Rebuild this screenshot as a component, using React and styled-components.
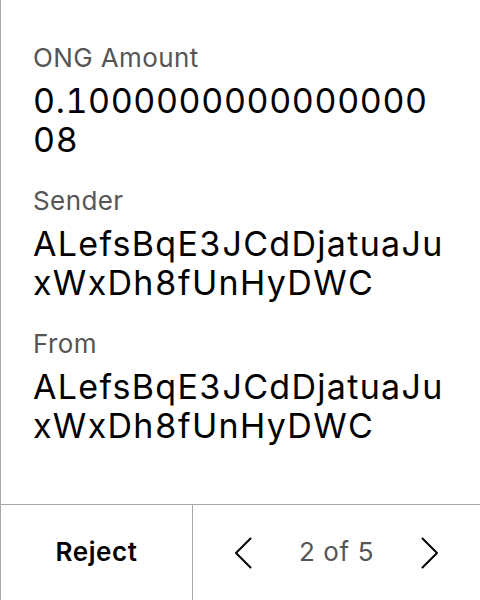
import React from 'react';
import styled, { createGlobalStyle } from 'styled-components';

const GlobalStyle = createGlobalStyle`
  html, body {
    margin: 0;
    padding: 0;
    background: #ffffff;
  }
  body {
    font-family: Inter, "Noto Sans", sans-serif;
  }
`;

const Screen = styled.div`
  width: 480px;
  height: 600px;
  box-sizing: border-box;
  border-left: 1px solid #a8a8a8;
  display: flex;
  flex-direction: column;
  background: #fff;
`;

const Content = styled.div`
  flex: 1;
  padding: 42px 36px 0 32px;
  display: flex;
  flex-direction: column;
  gap: 26px;
`;

const Field = styled.div`
  display: flex;
  flex-direction: column;
  gap: 7px;
`;

const Label = styled.div`
  font-size: 26px;
  line-height: 32px;
  letter-spacing: 0.4px;
  color: #555555;
`;

const Value = styled.div`
  font-size: 34px;
  line-height: 39px;
  letter-spacing: ${props => (props.$numeric ? '0.6px' : '1.3px')};
  font-variant-numeric: tabular-nums;
  color: #000;
  word-break: break-all;
`;

const Footer = styled.div`
  height: 95px;
  border-top: 1px solid #a8a8a8;
  display: grid;
  grid-template-columns: 192px 1fr;
`;

const RejectButton = styled.button`
  border: none;
  border-right: 1px solid #a8a8a8;
  background: none;
  font-family: inherit;
  font-size: 26px;
  font-weight: 600;
  letter-spacing: 0.6px;
  color: #000;
  padding: 0 0 2px 0;
`;

const Pager = styled.div`
  display: flex;
  align-items: center;
  justify-content: space-between;
  padding: 0 41px;
`;

const Count = styled.span`
  font-size: 26px;
  letter-spacing: 0.6px;
  color: #555555;
  padding-bottom: 2px;
`;

const Arrow = styled.svg`
  width: 18px;
  height: 32px;
`;

function Chevron({ dir }) {
  const d = dir === 'left' ? 'M16.5 1.5 L2 16 L16.5 30.5' : 'M1.5 1.5 L16 16 L1.5 30.5';
  return (
    <Arrow viewBox="0 0 18 32">
      <path d={d} fill="none" stroke="#000" strokeWidth="2" strokeLinecap="round" strokeLinejoin="round" />
    </Arrow>
  );
}

export default function App() {
  const fields = [
    { label: 'ONG Amount', value: '0.100000000000000008', numeric: true },
    { label: 'Sender', value: 'ALefsBqE3JCdDjatuaJuxWxDh8fUnHyDWC' },
    { label: 'From', value: 'ALefsBqE3JCdDjatuaJuxWxDh8fUnHyDWC' },
  ];
  return (
    <>
      <GlobalStyle />
      <Screen>
        <Content>
          {fields.map(f => (
            <Field key={f.label}>
              <Label>{f.label}</Label>
              <Value $numeric={f.numeric}>{f.value}</Value>
            </Field>
          ))}
        </Content>
        <Footer>
          <RejectButton>Reject</RejectButton>
          <Pager>
            <Chevron dir="left" />
            <Count>2 of 5</Count>
            <Chevron dir="right" />
          </Pager>
        </Footer>
      </Screen>
    </>
  );
}
